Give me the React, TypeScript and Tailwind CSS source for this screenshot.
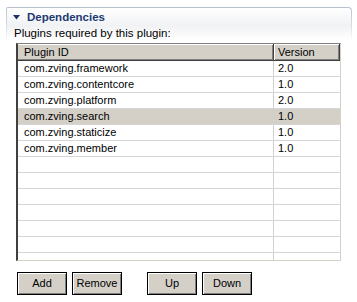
import React from 'react';

const plugins = [
  { id: 'com.zving.framework', version: '2.0' },
  { id: 'com.zving.contentcore', version: '1.0' },
  { id: 'com.zving.platform', version: '2.0' },
  { id: 'com.zving.search', version: '1.0', selected: true },
  { id: 'com.zving.staticize', version: '1.0' },
  { id: 'com.zving.member', version: '1.0' },
];

const rows = [...plugins, ...Array.from({ length: 7 }, () => ({ id: '', version: '', selected: false }))];

const Btn: React.FC<{ label: string; className?: string }> = ({ label, className = '' }) => (
  <button className={`w-[50px] h-[23px] bg-[#d4d0c8] border border-black shadow-[inset_1px_1px_0_#ffffff,inset_-1px_-1px_0_#808080] text-[11px] text-black leading-none flex items-center justify-center ${className}`}>
    {label}
  </button>
);

export default function App() {
  return (
    <div className="w-[357px] h-[302px] bg-white pt-[7px] overflow-hidden font-['Liberation_Sans',Arial,sans-serif] text-black">
      {/* section title, border fading downward */}
      <div className="ml-[6px] w-[346px] p-px rounded-tl-[2px] rounded-tr-[4px] bg-[linear-gradient(to_bottom,#b8c0cc,#d6dbe2_50%,#ffffff)]">
        <div className="rounded-tl-[1px] rounded-tr-[3px] bg-[linear-gradient(to_bottom,#ffffff,#f1f2f4_55%,#ffffff)] pt-[2px]">
          <div className="flex items-center h-[14px]">
            <svg width="7" height="5" viewBox="0 0 7 5" className="ml-[6px]">
              <polygon points="0,0 7,0 3.5,4.5" fill="#1b3263" />
            </svg>
            <span className="ml-[7px] text-[11.5px] font-bold leading-[14px] text-[#1c3a73]">Dependencies</span>
          </div>
          <div className="ml-[7px] mt-[2px] text-[11.5px] leading-[14px]">Plugins required by this plugin:</div>
        </div>
      </div>

      {/* table */}
      <div className="ml-[16px] mt-[2px] w-[325px] border-l-2 border-l-[#404040] border-t border-t-[#808080] border-r border-r-[#d4d0c8] border-b border-b-[#d4d0c8]">
        <div className="flex h-[17px] text-[11px]">
          <div className="w-[256px] bg-[#d4d0c8] border-r border-b border-[#404040] shadow-[inset_0_1px_0_#ffffff,inset_-1px_-1px_0_#808080] pl-[6px] flex items-center">
            Plugin ID
          </div>
          <div className="w-[66px] bg-[#d4d0c8] border-r border-b border-[#404040] shadow-[inset_1px_1px_0_#ffffff,inset_-1px_-1px_0_#808080] pl-[4px] flex items-center">
            Version
          </div>
        </div>
        <div className="h-[199px] overflow-hidden">
          {rows.map((r, i) => (
            <div key={i} className={`flex h-[16px] border-b border-b-[#d6d6d6] text-[11px] ${r.selected ? 'bg-[#d4d0c8]' : 'bg-white'}`}>
              <div className="w-[256px] border-r border-r-[#d0d0d0] pl-[6px] flex items-center">{r.id}</div>
              <div className="w-[66px] pl-[4px] flex items-center">{r.version}</div>
            </div>
          ))}
        </div>
      </div>

      {/* buttons */}
      <div className="ml-[17px] mt-[11px] flex items-start">
        <Btn label="Add" />
        <Btn label="Remove" className="ml-[5px]" />
        <Btn label="Up" className="ml-[25px]" />
        <Btn label="Down" className="ml-[5px]" />
      </div>
    </div>
  );
}
